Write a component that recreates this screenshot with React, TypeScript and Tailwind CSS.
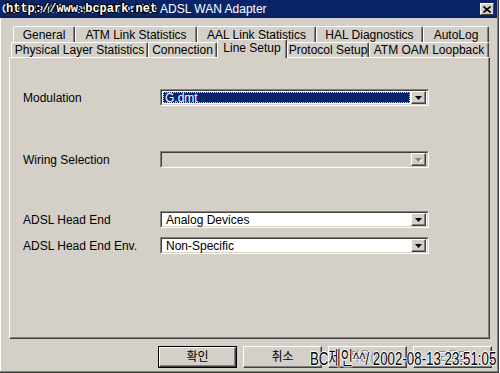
import React from "react";

const backTabs = [
  { label: "General", w: "w-[62px]" },
  { label: "ATM Link Statistics", w: "w-[122px]" },
  { label: "AAL Link Statistics", w: "w-[119px]" },
  { label: "HAL Diagnostics", w: "w-[107px]" },
  { label: "AutoLog", w: "w-[66px]" },
];

const frontTabs = [
  { label: "Physical Layer Statistics", w: "w-[137px]", active: false },
  { label: "Connection", w: "w-[69px]", active: false },
  { label: "Line Setup", w: "w-[70px]", active: true },
  { label: "Protocol Setup", w: "w-[82px]", active: false },
  { label: "ATM OAM Loopback", w: "w-[120px]", active: false },
];

const Arrow = ({ disabled }: { disabled?: boolean }) => (
  <svg width="7" height="4" viewBox="0 0 7 4">
    {disabled && <path d="M1 1h7l-3.5 4z" fill="#ffffff" />}
    <path d="M0 0h7L3.5 4z" fill={disabled ? "#808080" : "#000000"} />
  </svg>
);

const Combo = ({ value, selected, disabled }: { value?: string; selected?: boolean; disabled?: boolean }) => (
  <div className="w-[269px] h-[17px] border-t border-l border-[#808080] border-r border-b border-r-white border-b-white">
    <div
      className={`h-full flex items-center border-t border-l border-[#404040] border-r border-b border-r-[#d4d0c8] border-b-[#d4d0c8] ${
        disabled ? "bg-[#d4d0c8]" : "bg-white"
      }`}
    >
      <div className="flex-1 h-full p-px">
        {selected ? (
          <div className="h-full bg-[#0a246a] text-white outline-1 outline-dotted outline-[#d4d0c8] -outline-offset-1 pl-[2px] leading-[12px]">
            {value}
          </div>
        ) : (
          <div className="h-full pl-[3px] leading-[12px] text-black">{value}</div>
        )}
      </div>
      <div className="w-[15px] h-[13px] mr-px bg-[#d4d0c8] border-t border-l border-white border-r border-b border-r-[#404040] border-b-[#404040] shadow-[inset_-1px_-1px_0_#808080] flex items-center justify-center">
        <Arrow disabled={disabled} />
      </div>
    </div>
  </div>
);

const Row = ({ label, children, top }: { label: string; children: React.ReactNode; top: string }) => (
  <div className={`flex items-center h-[17px] ${top}`}>
    <div className="w-[137px] text-black leading-[14px]">{label}</div>
    {children}
  </div>
);

const Button = ({ label, disabled, def }: { label: string; disabled?: boolean; def?: boolean }) => (
  <div className={`w-[79px] h-[22px] ${def ? "border border-black" : ""}`}>
    <div className="h-full border-t border-l border-white border-r border-b border-r-[#404040] border-b-[#404040] shadow-[inset_-1px_-1px_0_#808080] flex items-center justify-center">
      <span
        className={
          disabled
            ? "text-[#808080] [text-shadow:1px_1px_0_#ffffff]"
            : "text-black"
        }
      >
        {label}
      </span>
    </div>
  </div>
);

export default function App() {
  return (
    <div className="w-[500px] h-[373px] overflow-hidden bg-white font-['Liberation_Sans','Noto_Sans_CJK_KR',sans-serif] text-[12px]">
      <div className="relative w-[499px] h-[373px] bg-[#d4d0c8] border-r border-b border-[#404040] shadow-[inset_-1px_-1px_0_#808080,inset_1px_0_0_#ffffff]">
        {/* title bar */}
        <div className="h-[18px] w-[497px] bg-[#0a246a] flex items-center">
          <div className="flex-1 pl-[2px] text-white whitespace-nowrap">Conexant AccessRunner PCI ADSL WAN Adapter</div>
          <div className="w-[14px] h-[12px] mr-[3px] bg-[#d4d0c8] border-t border-l border-white border-r border-b border-r-[#404040] border-b-[#404040] flex items-center justify-center">
            <svg width="8" height="7" viewBox="0 0 8 7">
              <path d="M0.5 0.5l7 6M7.5 0.5l-7 6" stroke="#000" strokeWidth="1.6" />
            </svg>
          </div>
        </div>
        <div className="absolute left-[6px] top-[1px] font-['Liberation_Mono',monospace] font-bold text-[12px] leading-[16px] text-white [text-shadow:1px_0_0_#000,-1px_0_0_#000,0_1px_0_#000,0_-1px_0_#000,1px_1px_0_#000,-1px_-1px_0_#000,1px_-1px_0_#000,-1px_1px_0_#000]">
          http://www.bcpark.net
        </div>

        {/* tabs */}
        <div className="mt-[8px] flex pl-[13px] h-[16px]">
          {backTabs.map((t) => (
            <div
              key={t.label}
              className={`${t.w} h-[16px] rounded-t-[2px] border-t border-l border-white border-r border-r-[#404040] shadow-[inset_-1px_0_0_#808080] flex justify-center pt-px leading-[14px] text-black whitespace-nowrap`}
            >
              {t.label}
            </div>
          ))}
        </div>
        <div className="flex pl-[11px] h-[15px] relative z-10">
          {frontTabs.map((t) =>
            t.active ? (
              <div
                key={t.label}
                className={`${t.w} h-[19px] -mt-[3px] rounded-t-[2px] bg-[#d4d0c8] border-t border-l border-white border-r border-r-[#404040] shadow-[inset_-1px_0_0_#808080] flex justify-center pt-[1px] leading-[14px] text-black whitespace-nowrap`}
              >
                {t.label}
              </div>
            ) : (
              <div
                key={t.label}
                className={`${t.w} h-[15px] rounded-t-[2px] bg-[#d4d0c8] border-t border-l border-white border-r border-r-[#404040] shadow-[inset_-1px_0_0_#808080] flex justify-center leading-[14px] text-black whitespace-nowrap`}
              >
                {t.label}
              </div>
            )
          )}
        </div>

        {/* panel */}
        <div className="ml-[9px] w-[481px] h-[282px] border-t border-l border-white border-r border-b border-r-[#404040] border-b-[#404040] shadow-[inset_-1px_-1px_0_#808080] pl-[13px] pt-px">
          <Row label="Modulation" top="mt-[30px]">
            <Combo value="G.dmt" selected />
          </Row>
          <Row label="Wiring Selection" top="mt-[45px]">
            <Combo disabled />
          </Row>
          <Row label="ADSL Head End" top="mt-[43px]">
            <Combo value="Analog Devices" />
          </Row>
          <Row label="ADSL Head End Env." top="mt-[9px]">
            <Combo value="Non-Specific" />
          </Row>
        </div>

        {/* buttons */}
        <div className="mt-[7px] ml-[158px] flex gap-[6px]">
          <Button label="확인" def />
          <Button label="취소" />
          <Button label="적용(A)" disabled />
          <Button label="도움말" disabled />
        </div>

        <div className="absolute left-[310px] top-[349px] origin-left scale-x-[0.7] text-[19px] leading-[20px] text-black whitespace-nowrap [text-shadow:1px_0_0_#fff,-1px_0_0_#fff,0_1px_0_#fff,0_-1px_0_#fff]">
          BC제인^^/ 2002-08-13 23:51:05
        </div>
      </div>
    </div>
  );
}
